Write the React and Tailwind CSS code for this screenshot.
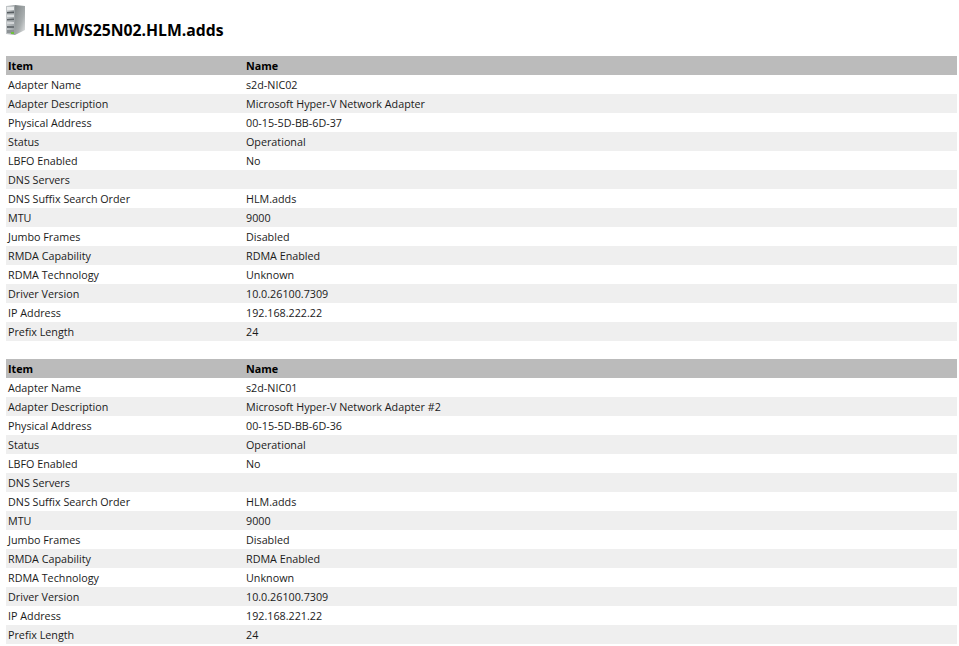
const adapters = [
  {
    name: "s2d-NIC02",
    description: "Microsoft Hyper-V Network Adapter",
    mac: "00-15-5D-BB-6D-37",
    ip: "192.168.222.22",
  },
  {
    name: "s2d-NIC01",
    description: "Microsoft Hyper-V Network Adapter #2",
    mac: "00-15-5D-BB-6D-36",
    ip: "192.168.221.22",
  },
];

function rowsFor(a) {
  return [
    ["Adapter Name", a.name],
    ["Adapter Description", a.description],
    ["Physical Address", a.mac],
    ["Status", "Operational"],
    ["LBFO Enabled", "No"],
    ["DNS Servers", ""],
    ["DNS Suffix Search Order", "HLM.adds"],
    ["MTU", "9000"],
    ["Jumbo Frames", "Disabled"],
    ["RMDA Capability", "RDMA Enabled"],
    ["RDMA Technology", "Unknown"],
    ["Driver Version", "10.0.26100.7309"],
    ["IP Address", a.ip],
    ["Prefix Length", "24"],
  ];
}

function ServerIcon() {
  return (
    <svg width="20" height="32" viewBox="0 0 20 32" className="shrink-0">
      <defs>
        <linearGradient id="front" x1="0" x2="1" y1="0" y2="0">
          <stop offset="0" stopColor="#c4c8ca" />
          <stop offset="1" stopColor="#9aa0a3" />
        </linearGradient>
        <linearGradient id="side" x1="0" x2="1" y1="0" y2="1">
          <stop offset="0" stopColor="#7d8385" />
          <stop offset="0.6" stopColor="#a8adae" />
          <stop offset="1" stopColor="#e6e8e8" />
        </linearGradient>
      </defs>
      <path d="M0 2 L9 1 L9 31 L0 30 Z" fill="url(#front)" />
      <path d="M9 1 L19 2 L19 26 L9 31 Z" fill="url(#side)" />
      <path d="M1 3 L8 2.5 L8 6 L1 6.5 Z" fill="#e9ebec" />
      <path d="M1 8 L8 7.5 L8 9 L1 9.5 Z" fill="#565c60" />
      <path d="M1 11 L8 10.5 L8 13 L1 13 Z" fill="#dde0e1" />
      <path d="M1 15 L8 14.5 L8 16 L1 16.5 Z" fill="#5c6266" />
      <path d="M1 18 L8 18 L8 20 L1 20 Z" fill="#d3d6d8" />
      <path d="M1 22 L8 22 L8 24 L1 24 Z" fill="#6a7074" />
      <rect x="1" y="26" width="7" height="3" fill="#8d9295" />
      <rect x="5" y="28" width="3" height="2" fill="#6fc23c" />
    </svg>
  );
}

function AdapterTable({ adapter }) {
  return (
    <div>
      <div className="grid grid-cols-[240px_1fr] h-[19px] pt-px bg-[#bbbbbb] font-bold text-black leading-[18px]">
        <div className="pl-[2px]">Item</div>
        <div>Name</div>
      </div>
      {rowsFor(adapter).map(([item, value], i) => (
        <div
          key={item}
          className={`grid grid-cols-[240px_1fr] h-[19px] pt-px leading-[18px] text-[#1a1a1a] ${i % 2 === 1 ? "bg-[#efefef]" : "bg-white"}`}
        >
          <div className="pl-[2px]">{item}</div>
          <div>{value}</div>
        </div>
      ))}
    </div>
  );
}

export default function App() {
  return (
    <div className="min-h-[646px] bg-white font-['Open_Sans','Liberation_Sans',sans-serif] text-[10.75px] overflow-hidden">
      <div className="flex h-[56px] pl-[6px] pt-[4px]">
        <ServerIcon />
        <h1 className="ml-[7px] mt-[15px] text-[15.75px] leading-[22px] font-bold text-black">HLMWS25N02.HLM.adds</h1>
      </div>
      <div className="flex flex-col gap-[18px] pl-[6px] pr-[2px]">
        {adapters.map((a) => (
          <AdapterTable key={a.name} adapter={a} />
        ))}
      </div>
    </div>
  );
}
